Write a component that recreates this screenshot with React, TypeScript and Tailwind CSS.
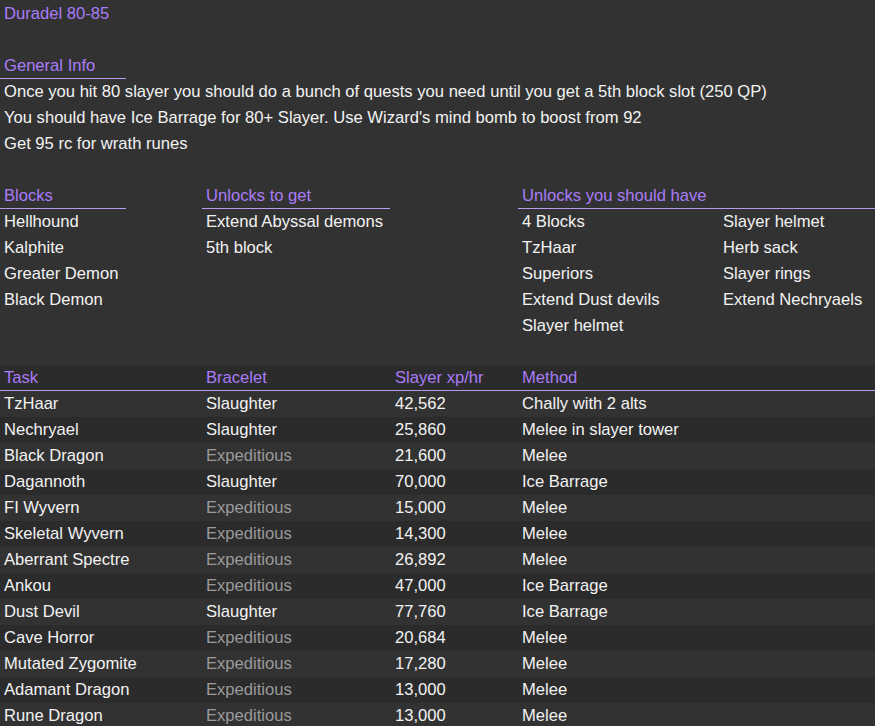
export default function App() {
  const P = "text-[#a97cf8]";
  const rows: [string, string, string, string][] = [
    ["TzHaar", "Slaughter", "42,562", "Chally with 2 alts"],
    ["Nechryael", "Slaughter", "25,860", "Melee in slayer tower"],
    ["Black Dragon", "Expeditious", "21,600", "Melee"],
    ["Dagannoth", "Slaughter", "70,000", "Ice Barrage"],
    ["FI Wyvern", "Expeditious", "15,000", "Melee"],
    ["Skeletal Wyvern", "Expeditious", "14,300", "Melee"],
    ["Aberrant Spectre", "Expeditious", "26,892", "Melee"],
    ["Ankou", "Expeditious", "47,000", "Ice Barrage"],
    ["Dust Devil", "Slaughter", "77,760", "Ice Barrage"],
    ["Cave Horror", "Expeditious", "20,684", "Melee"],
    ["Mutated Zygomite", "Expeditious", "17,280", "Melee"],
    ["Adamant Dragon", "Expeditious", "13,000", "Melee"],
    ["Rune Dragon", "Expeditious", "13,000", "Melee"],
  ];
  const H = "h-[26px] leading-[26px] whitespace-nowrap";
  const hdr = `${H} ${P} border-b border-[#b89af0]`;
  return (
    <div className="w-[875px] h-[726px] overflow-hidden bg-[#323232] text-[#f2f2f2] text-[16.6px] pt-[1px]" style={{ fontFamily: '"Liberation Sans", Arial, sans-serif' }}>
      <div className={`${H} px-[4px] ${P}`}>Duradel 80-85</div>
      <div className="h-[26px]" />
      <div className={`${hdr} w-[126px] px-[4px]`}>General Info</div>
      <div className="px-[4px]">
        <div className={H}>Once you hit 80 slayer you should do a bunch of quests you need until you get a 5th block slot (250 QP)</div>
        <div className={H}>You should have Ice Barrage for 80+ Slayer. Use Wizard's mind bomb to boost from 92</div>
        <div className={H}>Get 95 rc for wrath runes</div>
      </div>
      <div className="h-[26px]" />
      <div className="flex">
        <div className="w-[202px]">
          <div className={`${hdr} w-[126px] px-[4px]`}>Blocks</div>
          {["Hellhound", "Kalphite", "Greater Demon", "Black Demon"].map(t => <div key={t} className={`${H} px-[4px]`}>{t}</div>)}
        </div>
        <div className="w-[316px]">
          <div className={`${hdr} w-[188px] px-[4px]`}>Unlocks to get</div>
          {["Extend Abyssal demons", "5th block"].map(t => <div key={t} className={`${H} px-[4px]`}>{t}</div>)}
        </div>
        <div className="flex-1">
          <div className={`${hdr} px-[4px]`}>Unlocks you should have</div>
          <div className="grid grid-cols-[201px_1fr]">
            {["4 Blocks", "Slayer helmet", "TzHaar", "Herb sack", "Superiors", "Slayer rings", "Extend Dust devils", "Extend Nechryaels", "Slayer helmet", ""].map((t, i) => <div key={i} className={`${H} px-[4px]`}>{t}</div>)}
          </div>
        </div>
      </div>
      <div className="h-[26px]" />
      <div className={`grid grid-cols-[202px_189px_127px_1fr] ${hdr} bg-[#2b2b2b]`}>
        <div className="px-[4px]">Task</div><div className="px-[4px]">Bracelet</div><div className="px-[4px]">Slayer xp/hr</div><div className="px-[4px]">Method</div>
      </div>
      {rows.map((r, i) => (
        <div key={i} className={`grid grid-cols-[202px_189px_127px_1fr] ${H} ${i % 2 ? "bg-[#2b2b2b]" : "bg-[#323232]"}`}>
          <div className="px-[4px]">{r[0]}</div>
          <div className={`px-[4px] ${r[1] === "Expeditious" ? "text-[#9a9a9a]" : ""}`}>{r[1]}</div>
          <div className="px-[4px]">{r[2]}</div>
          <div className="px-[4px]">{r[3]}</div>
        </div>
      ))}
    </div>
  );
}
